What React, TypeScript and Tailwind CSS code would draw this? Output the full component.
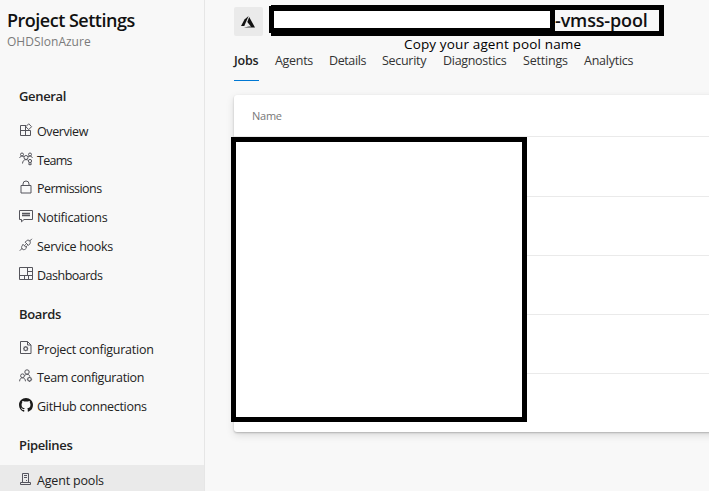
import type { ReactNode } from 'react';

const Svg = ({ children }: { children: ReactNode }) => (
  <svg width="14" height="14" viewBox="0 0 14 14" fill="none" stroke="#55555c" strokeWidth="1" className="mb-[4px] shrink-0">
    {children}
  </svg>
);

const icons: Record<string, ReactNode> = {
  overview: (
    <Svg>
      <path d="M7 2.5H1.5v10h10V7.5M1.5 7.5h10M6.500 2.500v10" />
      <path d="M9.700 .8l2.900 2.900-2.900 2.900-2.900-2.900z" />
    </Svg>
  ),
  teams: (
    <Svg>
      <circle cx="3" cy="2.500" r="1.500" />
      <circle cx="11" cy="2.500" r="1.500" />
      <circle cx="7" cy="5.500" r="2" />
      <path d="M.7 6c.3-1.300 1.200-2 2.300-2 .8 0 1.400.3 1.900.9M9.100 4.900c.5-.6 1.100-.9 1.900-.9 1.100 0 2 .7 2.300 2M3.500 11.500C3.700 9 5 7.600 7 7.600c.7 0 1.300.2 1.800.5" />
      <circle cx="11" cy="9" r="1.600" />
      <path d="M10 10.500v2.500l1-.6 1 .6v-2.500" />
    </Svg>
  ),
  lock: (
    <Svg>
      <path d="M2 5.500h10v7.500H2zM4 5.500V4a3 3 0 0 1 6 0v1.500" />
    </Svg>
  ),
  chat: (
    <Svg>
      <path d="M.5 1.500h13v9H5l-2.500 2.300v-2.300h-2z" />
      <path d="M3 4.500h8M3 6.500h8" strokeWidth="1.400" />
    </Svg>
  ),
  plug: (
    <Svg>
      <path d="M.8 12.700l2.500-2.500M10.400 3.300l2.500-2.500M4 6.300l3.600 3.600-1.300 1.200c-1 .8-2.300.8-3.100-.1-.8-.8-.9-2.200 0-3.200zM6.200 4.200l1.300-1.400c1-.9 2.300-.8 3.200 0 .8.900.9 2.200 0 3.200L9.400 7.400zM5.500 7.700l1.400-1.500M6.900 9l1.400-1.500" />
    </Svg>
  ),
  dashboard: (
    <Svg>
      <path d="M.5.5h13v12H.5zM8.500.5v8M.5 8.500h13M8.500 4.500h5M9.500 8.500v4M5.500 8.500v4" />
    </Svg>
  ),
  fileGear: (
    <Svg>
      <path d="M1.500.5h7l3.500 3.500v8.500H1.500zM8.500.5v3.500H12" />
      <circle cx="6.700" cy="7.700" r="1.800" strokeWidth="1.200" />
      <path d="M6.700 5v1M6.700 9.400v1M4 7.700h1M8.400 7.700h1M4.800 5.800l.7.700M8 8.900l.7.700M8.700 5.800l-.7.700M5.500 8.900l-.7.700" strokeWidth=".6" />
    </Svg>
  ),
  teamGear: (
    <Svg>
      <circle cx="8" cy="3" r="2.200" />
      <circle cx="3.500" cy="6.800" r="1.900" />
      <path d="M.6 12.300C.7 10 1.800 8.800 3.500 8.800S6.300 10 6.500 12.300M5.700 6.700C6.300 5.700 7 5.300 8 5.300c1.500 0 2.600.8 2.900 2.200" />
      <circle cx="10.500" cy="10.300" r="1.800" strokeWidth="1.200" />
      <path d="M10.500 7.600v1M10.500 12v1M7.800 10.300h1M12.200 10.300h1" strokeWidth=".7" />
    </Svg>
  ),
  github: (
    <svg width="14" height="14" viewBox="0 0 16 16" fill="#1b1b1b" className="mb-[4px] shrink-0">
      <path d="M8 0C3.580 0 0 3.580 0 8c0 3.540 2.290 6.530 5.470 7.590.4.070.55-.17.55-.38 0-.19-.01-.82-.01-1.490-2.010.37-2.530-.49-2.690-.94-.09-.23-.48-.94-.82-1.130-.28-.15-.68-.52-.01-.53.63-.01 1.080.58 1.230.82.72 1.210 1.870.87 2.330.66.07-.52.28-.87.51-1.070-1.780-.2-3.640-.89-3.640-3.950 0-.87.31-1.590.82-2.150-.08-.2-.36-1.020.08-2.120 0 0 .67-.21 2.200.82.64-.18 1.320-.27 2-.27s1.360.09 2 .27c1.530-1.040 2.200-.82 2.200-.82.44 1.100.16 1.920.08 2.120.51.56.82 1.270.82 2.150 0 3.070-1.870 3.750-3.650 3.950.29.25.54.73.54 1.480 0 1.070-.01 1.930-.01 2.200 0 .21.15.46.55.38A8 8 0 0 0 16 8c0-4.420-3.580-8-8-8z" />
    </svg>
  ),
  server: (
    <Svg>
      <path d="M3.500 10.500v-9h6v9M1.500 10.500h10v2h-10zM5 3.500h3M5 5.500h3M7 8.500h1" stroke="#55555f" />
    </Svg>
  ),
};

type Item = { icon: string; label: string; tracking: string; active?: boolean };

const groups: { title: string; items: Item[] }[] = [
  {
    title: 'General',
    items: [
      { icon: 'overview', label: 'Overview', tracking: 'tracking-[-0.4px]' },
      { icon: 'teams', label: 'Teams', tracking: 'tracking-[-0.7px]' },
      { icon: 'lock', label: 'Permissions', tracking: 'tracking-[-0.55px]' },
      { icon: 'chat', label: 'Notifications', tracking: 'tracking-[-0.25px]' },
      { icon: 'plug', label: 'Service hooks', tracking: 'tracking-[-0.3px]' },
      { icon: 'dashboard', label: 'Dashboards', tracking: 'tracking-[-0.5px]' },
    ],
  },
  {
    title: 'Boards',
    items: [
      { icon: 'fileGear', label: 'Project configuration', tracking: 'tracking-[-0.25px]' },
      { icon: 'teamGear', label: 'Team configuration', tracking: 'tracking-[-0.36px]' },
      { icon: 'github', label: 'GitHub connections', tracking: 'tracking-[-0.3px]' },
    ],
  },
  {
    title: 'Pipelines',
    items: [{ icon: 'server', label: 'Agent pools', tracking: 'tracking-[-0.18px]', active: true }],
  },
];

const tabs = [
  { label: 'Jobs', box: 'w-[41px]', tracking: 'tracking-[-0.2px]' },
  { label: 'Agents', box: 'w-[54px]', tracking: 'tracking-[-0.3px]' },
  { label: 'Details', box: 'w-[53px]', tracking: 'tracking-[-0.4px]' },
  { label: 'Security', box: 'w-[61px]', tracking: 'tracking-[-0.3px]' },
  { label: 'Diagnostics', box: 'w-[80px]', tracking: 'tracking-[-0.3px]' },
  { label: 'Settings', box: 'w-[61px]', tracking: 'tracking-[-0.2px]' },
  { label: 'Analytics', box: 'w-[60px]', tracking: 'tracking-[-0.25px]' },
];

function Sidebar() {
  return (
    <aside className="h-full w-[205px] shrink-0 overflow-hidden border-r border-[#e6e6e6]">
      <header className="h-[71px] pt-[7px] pl-[7px]">
        <h1 className="text-[18px] leading-[26px] font-semibold tracking-[-0.5px] text-[#111]">Project Settings</h1>
        <p className="text-[12px] leading-[17px] tracking-[0px] text-[#7b7b7b]">OHDSIonAzure</p>
      </header>
      {groups.map((g) => (
        <section key={g.title}>
          <h2 className="h-[45px] pt-[15px] pl-[19px] text-[13px] leading-[20px] font-semibold tracking-[-0.35px] text-[#222]">{g.title}</h2>
          {g.items.map((it) => (
            <div key={it.label} className={`flex h-[28.8px] items-center gap-1 pt-[2.7px] pl-[19px] ${it.active ? 'bg-[#eaeaea]' : ''}`}>
              {icons[it.icon]}
              <span className={`text-[12.5px] leading-[20px] whitespace-nowrap text-[#222] ${it.tracking}`}>{it.label}</span>
            </div>
          ))}
        </section>
      ))}
    </aside>
  );
}

export default function App() {
  return (
    <div className="relative flex h-[491px] w-[709px] overflow-hidden bg-[#f8f8f8] font-['Open_Sans','Noto_Sans',sans-serif]">
      <Sidebar />
      <main className="min-w-0 flex-1 pl-[29px]">
        <div className="flex h-[43px] pt-[7px]">
          <div className="flex size-[29px] items-center justify-center rounded-[2px] bg-[#eaeaea]">
            <svg width="15" height="12" viewBox="0 0 15 12">
              <path d="M7.600 0L3.500 3.600 0 10h3.300z" fill="#111" />
              <path d="M8.200 1l-1.900 5 3.400 4.200-6.600 1.300H14z" fill="#111" />
              <path d="M3.100 11.500l6.600-1.300.8 1.300z" fill="#999" />
            </svg>
          </div>
          <h2 className="ml-[292px] text-[18px] leading-[27px] font-semibold tracking-[-0.15px] text-[#111]">-vmss-pool</h2>
        </div>
        <nav className="flex h-[52px]">
          {tabs.map((t, i) => (
            <div key={t.label} className={`shrink-0 ${t.box}`}>
              <div className={`h-[38px] pt-[8px] text-[12.5px] leading-[20px] whitespace-nowrap ${t.tracking} ${i === 0 ? 'w-[25px] border-b border-[#0078d4] font-semibold text-[#222]' : 'text-[#333]'}`}>
                {t.label}
              </div>
            </div>
          ))}
        </nav>
        <div className="-mr-4 h-[337px] rounded-[3px] bg-white shadow-[0_1px_2px_rgba(0,0,0,0.22),0_3px_8px_rgba(0,0,0,0.12)]">
          <div className="h-[42px] border-b border-[#eaeaea] pt-[12px] pl-[18px] text-[11px] leading-[17px] tracking-[-0.25px] text-[#777]">Name</div>
          <div className="h-[60px] border-b border-[#eaeaea]" />
          <div className="h-[59px] border-b border-[#eaeaea]" />
          <div className="h-[59px] border-b border-[#eaeaea]" />
          <div className="h-[59px] border-b border-[#eaeaea]" />
        </div>
      </main>

      {/* Redaction frames and note drawn over the page */}
      <div className="absolute top-[5px] left-[550px] h-[31px] w-[114px] border-[5px] border-black" />
      <div className="absolute top-[5px] left-[271px] h-[31px] w-[284px] bg-black" />
      <div className="absolute top-[6px] left-[269px] h-[27px] w-[284px] bg-black" />
      <div className="absolute top-[11px] left-[274px] h-[17px] w-[276px] bg-white" />
      <div className="absolute top-[137px] left-[231px] h-[285px] w-[296px] border-[5px] border-black bg-white" />
      <p className="absolute top-[34px] left-[404px] text-[13.5px] leading-[20px] tracking-[0.14px] whitespace-nowrap text-black">Copy your agent pool name</p>
    </div>
  );
}
